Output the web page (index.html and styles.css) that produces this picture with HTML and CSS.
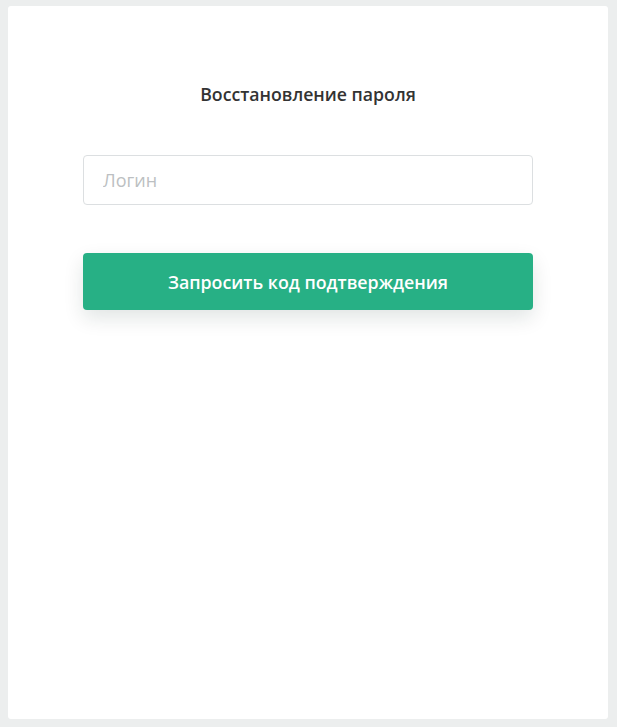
FILE: index.html
```html
<!DOCTYPE html>
<html lang="ru">
<head>
<meta charset="utf-8">
<title>Восстановление пароля</title>
<link rel="stylesheet" href="styles.css">
</head>
<body>
<div class="card">
  <h1 class="title">Восстановление пароля</h1>
  <input class="field" type="text" placeholder="Логин">
  <button class="btn" type="button">Запросить код подтверждения</button>
</div>
</body>
</html>
```
FILE: styles.css
```css
html, body {
  margin: 0;
  padding: 0;
  height: 100%;
}
body {
  background: #eceeee;
  font-family: "Open Sans", "Noto Sans", sans-serif;
  padding: 6px 0 0 8px;
  box-sizing: border-box;
}
.card {
  width: 600px;
  height: 713px;
  background: #ffffff;
  border-radius: 3px;
  box-sizing: border-box;
  padding: 76px 75px 0;
  display: flex;
  flex-direction: column;
}
.title {
  margin: 0;
  font-size: 17.7px;
  font-weight: 600;
  color: #333333;
  text-align: center;
  line-height: 24px;
}
.field {
  margin-top: 49px;
  height: 50px;
  width: 100%;
  box-sizing: border-box;
  border: 1px solid #dcdfe1;
  border-radius: 4px;
  padding: 0 19px;
  font-family: inherit;
  font-size: 18px;
  color: #333;
  outline: none;
}
.field::placeholder {
  color: #bcbfc2;
}
.btn {
  margin-top: 48px;
  height: 57px;
  width: 100%;
  border: none;
  border-radius: 4px;
  background: #27b085;
  color: #ffffff;
  font-family: inherit;
  font-size: 17.8px;
  font-weight: 600;
  box-shadow: 0 8px 20px rgba(0, 40, 30, 0.12);
  cursor: pointer;
}
```
